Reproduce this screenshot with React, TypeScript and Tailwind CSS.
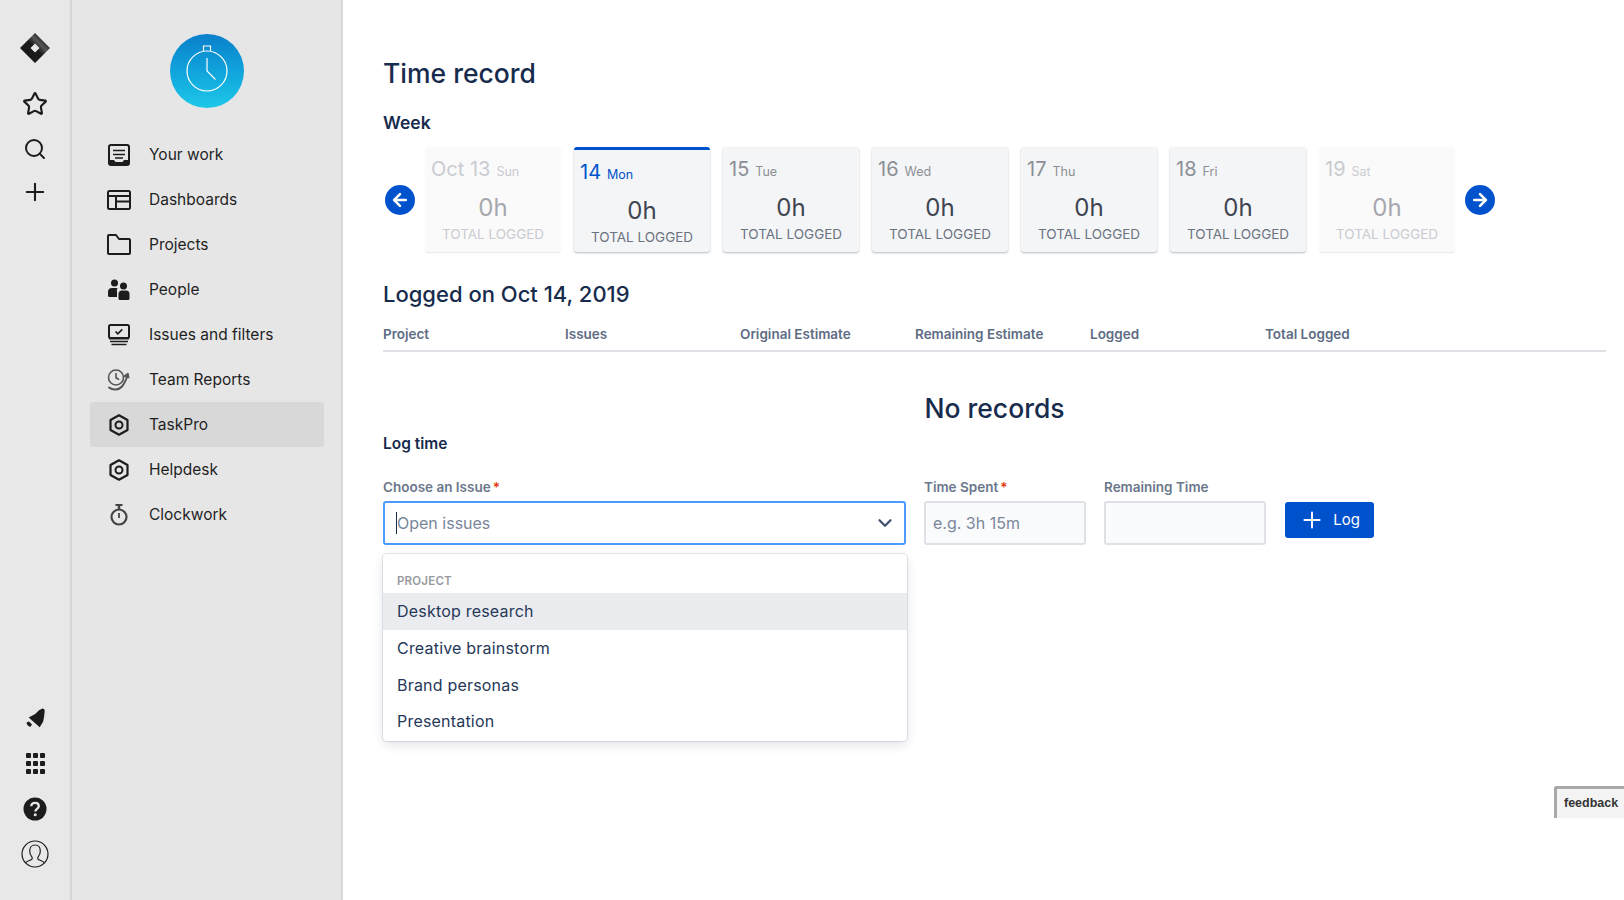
import { ArrowLeft, ArrowRight, ChevronDown, Plus, Search, Star } from 'lucide-react';

const font = { fontFamily: 'Inter, "Liberation Sans", sans-serif' };

function Logo() {
  return (
    <svg width="30" height="30" viewBox="0 0 30 30">
      <defs>
        <linearGradient id="jl" x1="0.2" y1="0.8" x2="0.8" y2="0.2">
          <stop offset="0" stopColor="#1a1a1a" />
          <stop offset="0.5" stopColor="#1a1a1a" />
          <stop offset="0.75" stopColor="#555" />
          <stop offset="1" stopColor="#222" />
        </linearGradient>
      </defs>
      <path fillRule="evenodd" d="M15 0 L30 15 L15 30 L0 15 Z M15 10.5 L10.5 15 L15 19.5 L19.5 15 Z" fill="url(#jl)" />
    </svg>
  );
}

function YourWorkIcon() {
  return (
    <svg width="22" height="22" viewBox="0 0 22 22" fill="none">
      <rect x="1" y="1" width="20" height="20" rx="2" stroke="#1c1c1c" strokeWidth="2" />
      <path d="M5 6.5h12M5 10.5h12M7 14h8" stroke="#1c1c1c" strokeWidth="1.6" />
      <path d="M1 16h5l1.5 2h7l1.5-2h5v4a1 1 0 0 1-1 1H2a1 1 0 0 1-1-1z" fill="#1c1c1c" />
    </svg>
  );
}

function DashboardIcon() {
  return (
    <svg width="24" height="20" viewBox="0 0 24 20" fill="none" stroke="#1c1c1c" strokeWidth="2">
      <rect x="1" y="1" width="22" height="18" rx="1.5" />
      <path d="M1 6h22M9 6v13M9 11.5h14" />
    </svg>
  );
}

function FolderIcon() {
  return (
    <svg width="24" height="21" viewBox="0 0 24 21" fill="none" stroke="#1c1c1c" strokeWidth="2" strokeLinejoin="round">
      <path d="M1 2a1 1 0 0 1 1-1h7l3 4h10a1 1 0 0 1 1 1v13a1 1 0 0 1-1 1H2a1 1 0 0 1-1-1z" />
    </svg>
  );
}

function PeopleIcon() {
  return (
    <svg width="22" height="21" viewBox="0 0 22 21" fill="#1c1c1c">
      <circle cx="6.5" cy="4" r="3.5" />
      <circle cx="15.5" cy="7" r="3.5" />
      <path d="M0 13a4 4 0 0 1 4-4h4.5a4 4 0 0 1 1 .2A5 5 0 0 0 9 13v5H1.5A1.5 1.5 0 0 1 0 16.500z" />
      <path d="M10.500 15a3.500 3.500 0 0 1 3.500-3.500h4a3.500 3.500 0 0 1 3.500 3.500v4.500a1.500 1.500 0 0 1-1.500 1.500h-8a1.500 1.500 0 0 1-1.500-1.500z" />
    </svg>
  );
}

function IssuesIcon() {
  return (
    <svg width="22" height="22" viewBox="0 0 22 22" fill="none" stroke="#1c1c1c">
      <rect x="1" y="1" width="20" height="13" rx="1.500" strokeWidth="2" />
      <path d="M7.500 7.500l2.300 2.300 4.500-4.500" strokeWidth="1.700" />
      <path d="M1 14.500h20" strokeWidth="2" />
      <path d="M2 17.500h18" strokeWidth="1.500" />
      <path d="M3.500 20.500h15" strokeWidth="1.500" />
    </svg>
  );
}

function TeamReportsIcon() {
  return (
    <svg width="24" height="22" viewBox="0 0 24 22" fill="none" stroke="#555" strokeWidth="1.600" strokeLinecap="round">
      <circle cx="9" cy="8.500" r="7.500" />
      <path d="M9 4.500v4.300l2.500 1.500" />
      <path d="M2 18.500c4 3 10 2.500 13-1 2.500-3 4-6.500 5.500-11" strokeWidth="2" />
      <path d="M17 7l4-3 1 4.500z" fill="#555" strokeWidth="1" />
    </svg>
  );
}

function HexIcon() {
  return (
    <svg width="20" height="22" viewBox="0 0 20 22" fill="none" stroke="#1c1c1c" strokeWidth="2.200" strokeLinejoin="round">
      <path d="M10 1.300 18.500 6v10L10 20.700 1.500 16V6z" />
      <circle cx="10" cy="11" r="3.500" strokeWidth="2" />
    </svg>
  );
}

function ClockworkIcon() {
  return (
    <svg width="18" height="22" viewBox="0 0 18 22" fill="none" stroke="#444" strokeWidth="2.200">
      <circle cx="9" cy="13" r="7.500" />
      <path d="M5.500 1h7" strokeWidth="2" />
      <path d="M9 1v4" strokeWidth="2.500" />
      <path d="M9 9v5" strokeWidth="1.800" />
    </svg>
  );
}

function BellIcon() {
  return (
    <svg width="20" height="20" viewBox="0 0 20 20" fill="#1c1c1c">
      <path d="M17.500 0.500c1.200 0 2.200 1 2.200 2.200l-0.500 5.300-1 5.500-3.500 5.800-11-9.800 6.500-3.500 3.800-3.800z" />
      <path d="M1.500 14l2.500-1 3 3-1.500 2.300c-1.800 0-3.800-2-4-4.300z" transform="translate(0 0.500)" />
    </svg>
  );
}

function GridIcon() {
  return (
    <div className="grid grid-cols-3 gap-[3px] w-[19px]">
      {Array.from({ length: 9 }).map((_, i) => (
        <div key={i} className="w-[5px] h-[5px] bg-[#1c1c1c] rounded-[1px]" />
      ))}
    </div>
  );
}

function HelpIcon() {
  return (
    <svg width="24" height="24" viewBox="0 0 24 24">
      <circle cx="12" cy="12" r="11.500" fill="#1c1c1c" />
      <path d="M8.300 9.300c0-2.200 1.700-3.500 3.800-3.500s3.700 1.300 3.700 3.200c0 2.900-3.500 2.800-3.500 5.500" fill="none" stroke="#e8e8e8" strokeWidth="2.300" />
      <circle cx="12.200" cy="17.800" r="1.500" fill="#e8e8e8" />
    </svg>
  );
}

function AvatarIcon() {
  return (
    <svg width="28" height="28" viewBox="0 0 28 28" fill="none" stroke="#1c1c1c" strokeWidth="1.200">
      <circle cx="14" cy="14" r="13" />
      <path d="M4.500 22.800c1.500-2 5.300-2.300 6.500-3.600 0.500-0.800 0.300-1.700-0.300-2.500C9.300 15.200 8.700 13 8.700 11c0-3.500 2-6 5.300-6s5.300 2.500 5.300 6c0 2-0.600 4.200-2 5.700-0.600 0.800-0.800 1.700-0.300 2.500 1.200 1.300 5 1.600 6.500 3.600" />
    </svg>
  );
}

function TimerBadge() {
  return (
    <div className="w-[74px] h-[74px] rounded-full bg-gradient-to-b from-[#0b7fcb] to-[#1ec8ea] flex items-center justify-center">
      <svg width="44" height="50" viewBox="0 0 44 50" fill="none" stroke="#fff" strokeWidth="1.200" className="mt-[-7px]">
        <circle cx="22" cy="28" r="20" />
        <path d="M18.500 8V3h7v5" />
        <path d="M22 15v13l8.500 8.500" />
      </svg>
    </div>
  );
}

const navItems = [
  { label: 'Your work', icon: <YourWorkIcon /> },
  { label: 'Dashboards', icon: <DashboardIcon /> },
  { label: 'Projects', icon: <FolderIcon /> },
  { label: 'People', icon: <PeopleIcon /> },
  { label: 'Issues and filters', icon: <IssuesIcon /> },
  { label: 'Team Reports', icon: <TeamReportsIcon /> },
  { label: 'TaskPro', icon: <HexIcon />, active: true },
  { label: 'Helpdesk', icon: <HexIcon /> },
  { label: 'Clockwork', icon: <ClockworkIcon /> },
];

const days = [
  { date: 'Oct 13', day: 'Sun', kind: 'off' },
  { date: '14', day: 'Mon', kind: 'active' },
  { date: '15', day: 'Tue', kind: 'normal' },
  { date: '16', day: 'Wed', kind: 'normal' },
  { date: '17', day: 'Thu', kind: 'normal' },
  { date: '18', day: 'Fri', kind: 'normal' },
  { date: '19', day: 'Sat', kind: 'off' },
];

function DayCard({ date, day, kind }: { date: string; day: string; kind: string }) {
  if (kind === 'active') {
    return (
      <div className="w-[136px] h-[105px] rounded-[3px] bg-[#f4f5f7] border-t-[3px] border-[#0052cc] shadow-[0_1px_2px_rgba(9,30,66,0.3)] px-[6px] flex flex-col items-stretch">
        <div className="flex items-baseline gap-[6px] text-[#0052cc] mt-[7px] h-[28px]">
          <span className="text-[20px]">{date}</span>
          <span className="text-[12.500px]">{day}</span>
        </div>
        <div className="text-center text-[24px] leading-[30px] text-[#3f4450] mt-[11px]">0h</div>
        <div className="text-center text-[13.500px] leading-[18px] text-[#6b7280] mt-[2px]">TOTAL LOGGED</div>
      </div>
    );
  }
  const off = kind === 'off';
  return (
    <div className={`w-[136px] h-[105px] rounded-[3px] px-[6px] flex flex-col ${off ? 'bg-[#fafafb] shadow-[0_1px_1px_rgba(9,30,66,0.1)]' : 'bg-[#f4f5f7] shadow-[0_1px_2px_rgba(9,30,66,0.3)]'}`}>
      <div className={`flex items-baseline gap-[6px] mt-[7px] h-[28px] ${off ? 'text-[#c9cbd0]' : 'text-[#8c8f96]'}`}>
        <span className="text-[20px]">{date}</span>
        <span className="text-[12.500px]">{day}</span>
      </div>
      <div className={`text-center text-[24px] leading-[30px] mt-[11px] ${off ? 'text-[#a6a8ad]' : 'text-[#3f4450]'}`}>0h</div>
      <div className={`text-center text-[13.500px] leading-[18px] mt-[2px] ${off ? 'text-[#c9cbd0]' : 'text-[#6b7280]'}`}>TOTAL LOGGED</div>
    </div>
  );
}

function RoundArrow({ dir }: { dir: 'left' | 'right' }) {
  return (
    <button className="w-[30px] h-[30px] rounded-full bg-[#0052cc] flex items-center justify-center text-white shrink-0">
      {dir === 'left' ? <ArrowLeft size={20} strokeWidth={3} /> : <ArrowRight size={20} strokeWidth={3} />}
    </button>
  );
}

export default function App() {
  const columns = ['Project', 'Issues', 'Original Estimate', 'Remaining Estimate', 'Logged', 'Total Logged'];
  return (
    <div className="flex w-full h-[900px] overflow-hidden bg-white" style={font}>
      <aside className="w-[72px] shrink-0 bg-[#e8e8e8] border-r-2 border-[#d6d6d6] flex flex-col items-center justify-between pt-[33px] pb-[32px]">
        <div className="flex flex-col items-center">
          <Logo />
          <Star size={26} strokeWidth={2} className="text-[#1c1c1c] mt-[28px]" />
          <Search size={24} strokeWidth={2} className="text-[#1c1c1c] mt-[20px]" />
          <Plus size={28} strokeWidth={1.800} className="text-[#1c1c1c] mt-[17px]" />
        </div>
        <div className="flex flex-col items-center">
          <BellIcon />
          <div className="mt-[25px]"><GridIcon /></div>
          <div className="mt-[23px]"><HelpIcon /></div>
          <div className="mt-[19px]"><AvatarIcon /></div>
        </div>
      </aside>

      <nav className="w-[271px] shrink-0 bg-[#e6e6e6] border-r-2 border-[#d9d9d9] pl-[18px] pr-[17px] pt-[34px]">
        <div className="flex justify-center mb-[24px]">
          <TimerBadge />
        </div>
        {navItems.map((item) => (
          <div key={item.label} className={`h-[45px] flex items-center rounded-[3px] ${item.active ? 'bg-[#d8d8d8]' : ''}`}>
            <div className="w-[54px] pl-[3px] flex justify-center shrink-0">{item.icon}</div>
            <span className="ml-[5px] text-[15.500px] text-[#1f1f1f]">{item.label}</span>
          </div>
        ))}
      </nav>

      <main className="flex-1 min-w-0 pl-[40px] pr-[18px] pt-[55px]">
        <h1 className="text-[26.500px] leading-[36px] font-medium text-[#172b4d]">Time record</h1>
        <h2 className="text-[17.500px] leading-[24px] font-semibold text-[#172b4d] mt-[20px]">Week</h2>

        <div className="flex items-center mt-[12px] ml-[2px] h-[105px]">
          <RoundArrow dir="left" />
          <div className="flex gap-[13px] ml-[10px] mr-[10px]">
            {days.map((d) => (
              <DayCard key={d.date} {...d} />
            ))}
          </div>
          <RoundArrow dir="right" />
        </div>

        <h2 className="text-[22px] leading-[30px] font-medium text-[#172b4d] mt-[27px]">Logged on Oct 14, 2019</h2>
        <div className="grid grid-cols-[182px_175px_175px_175px_175px_1fr] mt-[15px] pb-[6px] border-b-2 border-[#dfe1e6] text-[13.500px] leading-[20px] font-semibold text-[#5e6c84]">
          {columns.map((c) => (
            <div key={c}>{c}</div>
          ))}
        </div>

        <div className="text-center text-[26.500px] leading-[36px] font-medium text-[#172b4d] mt-[38px]">No records</div>
        <h3 className="text-[15.500px] leading-[22px] font-semibold text-[#172b4d] mt-[7px]">Log time</h3>

        <div className="flex items-start mt-[22px]">
          <div className="relative w-[523px] shrink-0">
            <label className="block text-[13.500px] leading-[20px] font-semibold text-[#6b778c] h-[24px]">
              Choose an Issue<span className="text-[#de350b] ml-[2px]">*</span>
            </label>
            <div className="h-[44px] border-2 border-[#4c9aff] rounded-[3px] bg-white flex items-center pl-[11px] pr-[8px]">
              <div className="w-px h-[22px] bg-[#172b4d]" />
              <span className="text-[16px] text-[#7a869a] flex-1">Open issues</span>
              <ChevronDown size={22} strokeWidth={2.500} className="text-[#42526e]" />
            </div>
            <div className="flex items-center gap-[11px] mt-[6px] ml-[6px]">
              <div className="w-[15px] h-[15px] rounded-[3px] bg-[#0052cc]" />
              <span className="text-[14px] text-[#172b4d]">Only show assigned issues</span>
            </div>

            <div className="absolute left-0 top-[77px] w-[524px] h-[187px] bg-white rounded-[4px] shadow-[0_0_0_1px_rgba(9,30,66,0.1),0_4px_11px_rgba(9,30,66,0.12)] pt-[19px]">
              <div className="pl-[14px] text-[11.500px] leading-[16px] font-semibold text-[#97999e] tracking-[0.2px]">PROJECT</div>
              <div className="mt-[4px]">
                {['Desktop research', 'Creative brainstorm', 'Brand personas', 'Presentation'].map((p, i) => (
                  <div key={p} className={`h-[36.700px] flex items-center pl-[14px] text-[16px] text-[#253858] tracking-[0.2px] ${i === 0 ? 'bg-[#ebecf0]' : ''}`}>
                    {p}
                  </div>
                ))}
              </div>
            </div>
          </div>

          <div className="w-[162px] ml-[18px] shrink-0">
            <label className="block text-[13.500px] leading-[20px] font-semibold text-[#6b778c] h-[24px]">
              Time Spent<span className="text-[#de350b] ml-[2px]">*</span>
            </label>
            <div className="h-[44px] border-2 border-[#dfe1e6] rounded-[3px] bg-[#fafbfc] flex items-center pl-[7px] text-[16px] text-[#7a869a]">
              e.g. 3h 15m
            </div>
          </div>

          <div className="w-[162px] ml-[18px] shrink-0">
            <label className="block text-[13.500px] leading-[20px] font-semibold text-[#6b778c] h-[24px]">Remaining Time</label>
            <div className="h-[44px] border-2 border-[#dfe1e6] rounded-[3px] bg-[#fafbfc]" />
          </div>

          <button className="ml-[19px] mt-[25px] w-[89px] h-[36px] rounded-[3px] bg-[#0052cc] text-white flex items-center justify-center gap-[8px] text-[15px]">
            <Plus size={26} strokeWidth={1.800} />
            Log
          </button>
        </div>
      </main>

      <div className="fixed right-0 top-[786px] w-[70px] h-[32px] bg-[#f4f4f4] border-l-[3px] border-t-[3px] border-[#a8a8a8] rounded-tl-[3px] flex items-center pl-[7px] text-[12.500px] font-bold text-[#333]" style={{ fontFamily: '"Liberation Sans", sans-serif' }}>
        feedback
      </div>
    </div>
  );
}
